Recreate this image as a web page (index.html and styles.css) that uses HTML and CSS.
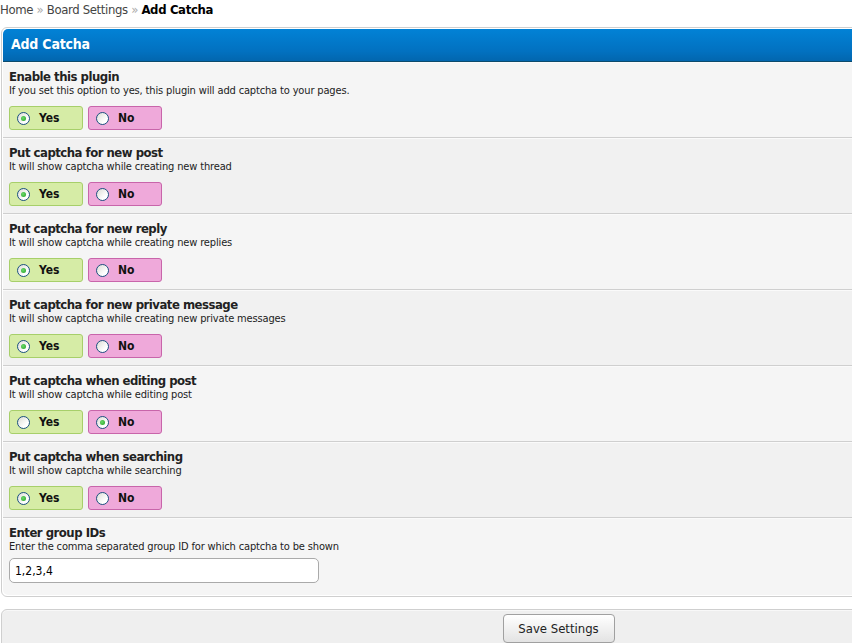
FILE: index.html
```html
<!DOCTYPE html>
<html>
<head>
<meta charset="utf-8">
<link rel="stylesheet" href="styles.css">
</head>
<body>
<div class="page">
  <div class="crumbs"><span class="crumb">Home</span> <span class="sep">»</span> <span class="crumb">Board Settings</span> <span class="sep">»</span> <b class="current">Add Catcha</b></div>

  <div class="box">
    <div class="head">Add Catcha</div>

    <div class="row odd">
      <div class="title">Enable this plugin</div>
      <div class="desc">If you set this option to yes, this plugin will add captcha to your pages.</div>
      <div class="opts">
        <span class="opt yes"><span class="radio on"></span>Yes</span>
        <span class="opt no"><span class="radio"></span>No</span>
      </div>
    </div>

    <div class="row even">
      <div class="title">Put captcha for new post</div>
      <div class="desc">It will show captcha while creating new thread</div>
      <div class="opts">
        <span class="opt yes"><span class="radio on"></span>Yes</span>
        <span class="opt no"><span class="radio"></span>No</span>
      </div>
    </div>

    <div class="row odd">
      <div class="title">Put captcha for new reply</div>
      <div class="desc">It will show captcha while creating new replies</div>
      <div class="opts">
        <span class="opt yes"><span class="radio on"></span>Yes</span>
        <span class="opt no"><span class="radio"></span>No</span>
      </div>
    </div>

    <div class="row even">
      <div class="title">Put captcha for new private message</div>
      <div class="desc">It will show captcha while creating new private messages</div>
      <div class="opts">
        <span class="opt yes"><span class="radio on"></span>Yes</span>
        <span class="opt no"><span class="radio"></span>No</span>
      </div>
    </div>

    <div class="row odd">
      <div class="title">Put captcha when editing post</div>
      <div class="desc">It will show captcha while editing post</div>
      <div class="opts">
        <span class="opt yes"><span class="radio"></span>Yes</span>
        <span class="opt no"><span class="radio on"></span>No</span>
      </div>
    </div>

    <div class="row even">
      <div class="title">Put captcha when searching</div>
      <div class="desc">It will show captcha while searching</div>
      <div class="opts">
        <span class="opt yes"><span class="radio on"></span>Yes</span>
        <span class="opt no"><span class="radio"></span>No</span>
      </div>
    </div>

    <div class="row odd last">
      <div class="title">Enter group IDs</div>
      <div class="desc">Enter the comma separated group ID for which captcha to be shown</div>
      <div class="field"><input class="text" type="text" value="1,2,3,4"></div>
    </div>
  </div>

  <div class="buttons">
    <button class="save" type="button">Save Settings</button>
  </div>
</div>
</body>
</html>
```

FILE: styles.css
```css
html, body {
  margin: 0;
  padding: 0;
  overflow: hidden;
  background: #ffffff;
}

body {
  font-family: "DejaVu Sans Condensed", "DejaVu Sans", Verdana, sans-serif;
  color: #000;
}

.page {
  width: 1116px;
}

.crumbs {
  font-size: 13px;
  line-height: 19px;
  height: 19px;
  color: #333;
  letter-spacing: -0.35px;
}

.crumb {
  color: #444;
}

.sep {
  color: #aaa;
}

.current {
  color: #000;
  font-weight: bold;
}

.box {
  margin: 8px 0 0 1px;
  border: 1px solid #cfcfcf;
  border-radius: 6px;
  padding: 1px;
  background: #fff;
  overflow: hidden;
}

.head {
  height: 32px;
  line-height: 31px;
  padding-left: 8px;
  color: #fff;
  font-size: 14px;
  font-weight: bold;
  letter-spacing: -0.2px;
  background: linear-gradient(#0282d6, #0271c0 70%, #0266ae);
  border-bottom: 1px solid #0c4a6c;
  border-radius: 5px 5px 0 0;
}

.row {
  padding: 7px 6px 7px 6px;
  border-bottom: 1px solid #cfcfcf;
  box-shadow: inset 0 1px 0 #fafafa;
}

.row.odd {
  background: #f5f5f5;
}

.row.even {
  background: #f1f1f1;
}

.row.last {
  border-bottom: none;
  padding-bottom: 12px;
  border-radius: 0 0 5px 5px;
}

.title {
  font-size: 13px;
  font-weight: bold;
  line-height: 15px;
  color: #222;
  letter-spacing: -0.5px;
}

.desc {
  font-size: 11px;
  line-height: 13px;
  color: #222;
  letter-spacing: -0.15px;
}

.opts {
  display: flex;
  gap: 5px;
  margin-top: 9px;
  height: 24px;
}

.opt {
  box-sizing: border-box;
  width: 74px;
  height: 24px;
  border-radius: 3px;
  display: flex;
  align-items: center;
  padding-left: 7px;
  gap: 9px;
  font-size: 12px;
  font-weight: bold;
  color: #111;
}

.opt.yes {
  background: #d6eca6;
  border: 1px solid #a7cf6a;
}

.opt.no {
  background: #efa9da;
  border: 1px solid #c865aa;
}

.radio {
  box-sizing: border-box;
  width: 13px;
  height: 13px;
  border-radius: 50%;
  border: 1px solid #1c5180;
  background: linear-gradient(135deg, #dcdcd5, #ffffff 70%);
  position: relative;
  flex: none;
}

.radio.on::after {
  content: "";
  position: absolute;
  left: 3px;
  top: 3px;
  width: 5px;
  height: 5px;
  border-radius: 50%;
  background: radial-gradient(circle at 40% 40%, #6cd86c, #21a121);
}

.field {
  margin-top: 5px;
}

.text {
  box-sizing: border-box;
  width: 310px;
  height: 25px;
  border: 1px solid #aaaaaa;
  border-radius: 5px;
  background: #fff;
  font-family: "DejaVu Sans Condensed", "DejaVu Sans", Verdana, sans-serif;
  font-size: 12px;
  padding: 0 5px;
  margin: 0;
  color: #000;
  outline: none;
  display: block;
}

.buttons {
  margin: 12px 0 0 1px;
  border: 1px solid #cfcfcf;
  border-radius: 6px;
  background: #efefef;
  height: 60px;
  box-shadow: inset 0 1px 0 #f8f8f8;
  display: flex;
  justify-content: center;
  padding-top: 4px;
  box-sizing: border-box;
}

.save {
  height: 29px;
  width: 112px;
  border: 1px solid #a0a0a0;
  border-radius: 4px;
  background: linear-gradient(#ffffff, #e3e3e3);
  font-family: "DejaVu Sans Condensed", "DejaVu Sans", Verdana, sans-serif;
  font-size: 13px;
  color: #222;
  padding: 0;
  margin: 0;
}
```
